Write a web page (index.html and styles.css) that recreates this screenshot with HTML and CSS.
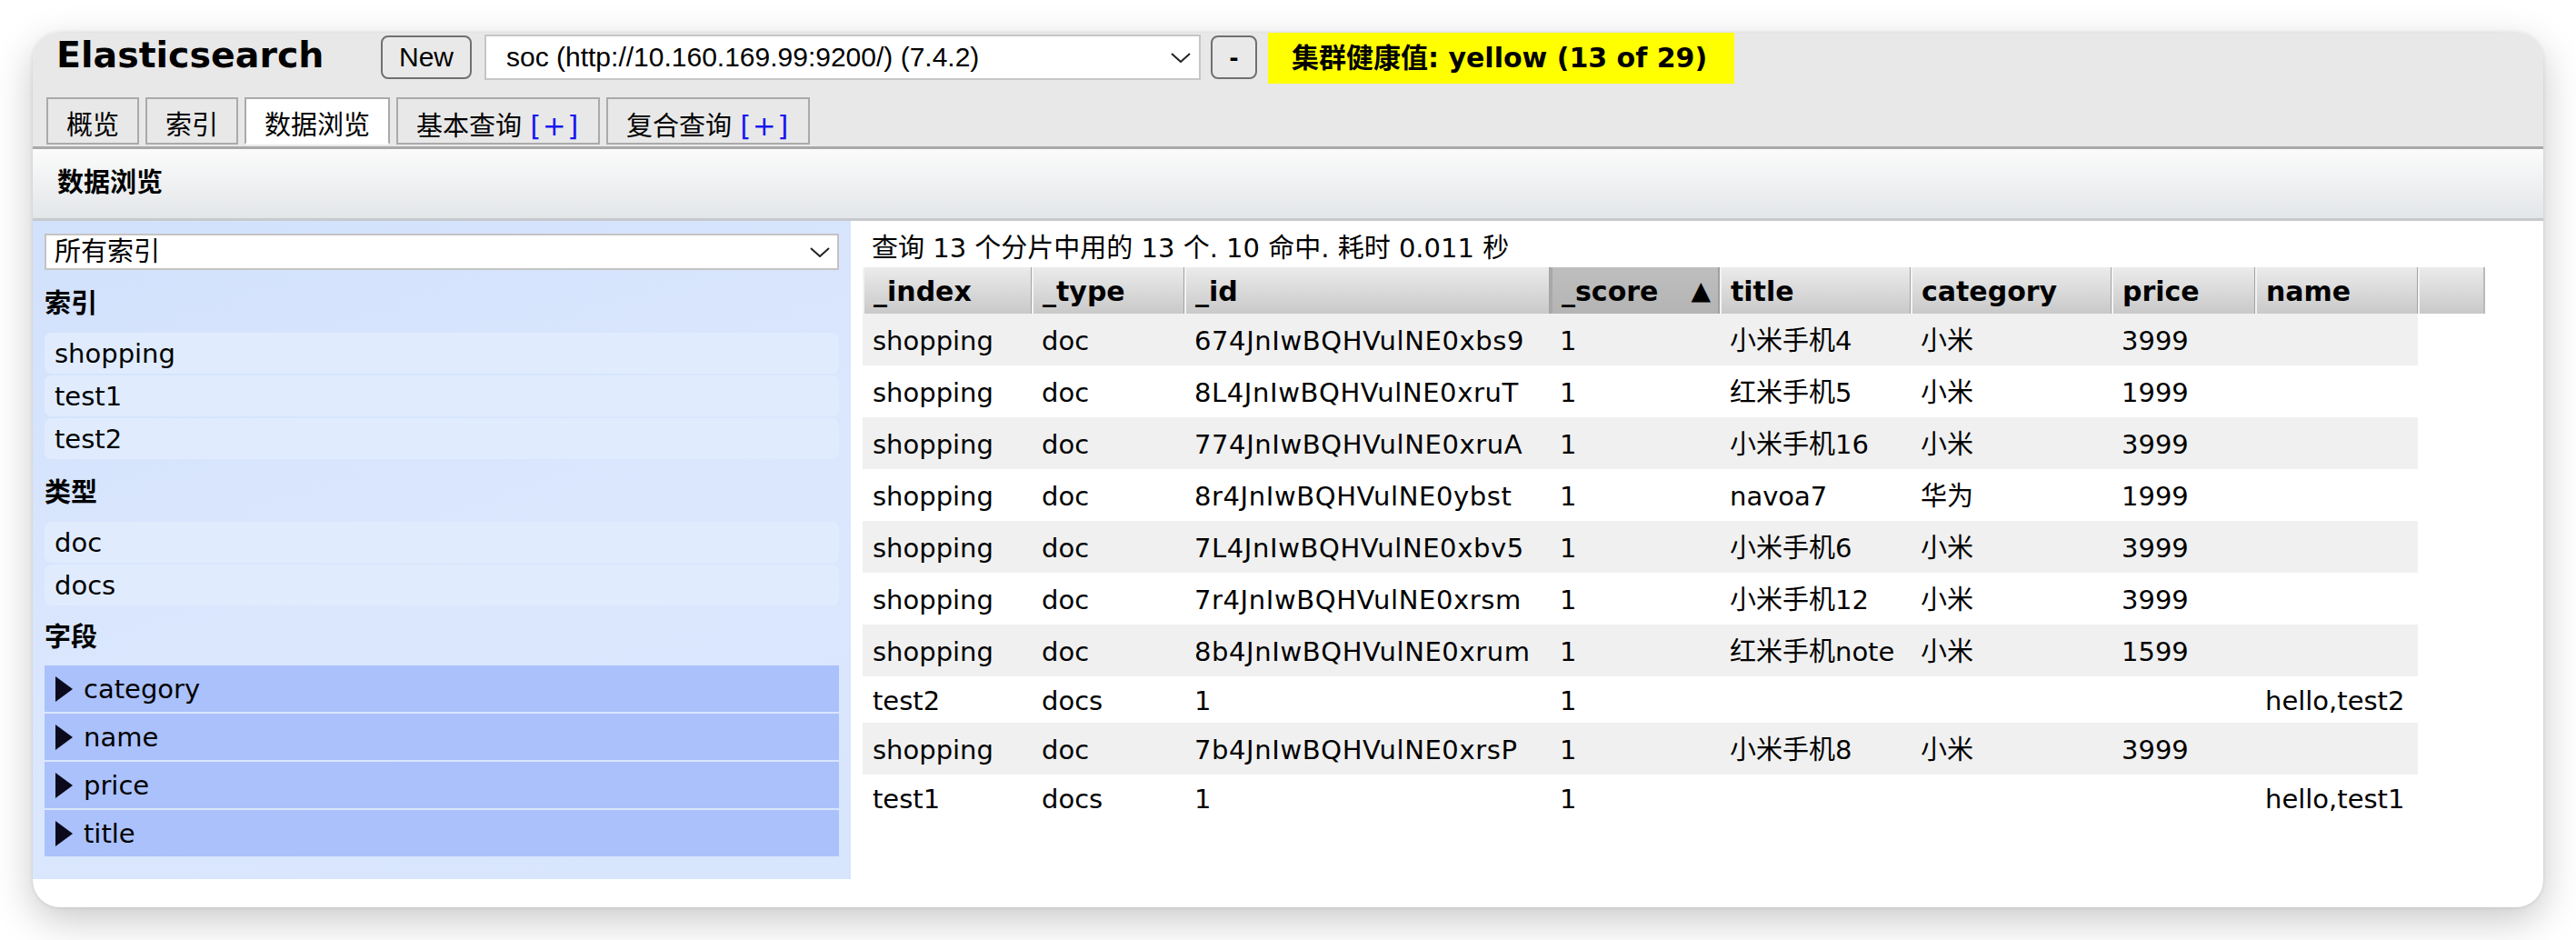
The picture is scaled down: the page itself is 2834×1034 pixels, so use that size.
FILE: index.html
```html
<!DOCTYPE html>
<html lang="zh-CN">
<head>
<meta charset="utf-8">
<title>Elasticsearch</title>
<link rel="stylesheet" href="styles.css">
</head>
<body>
<div class="window">
  <header class="header">
    <div class="toprow">
      <h1 class="brand">Elasticsearch</h1>
      <button class="btn btn-new">New</button>
      <div class="conn-select">
        <span>soc (http://10.160.169.99:9200/) (7.4.2)</span>
        <svg class="chev" width="22" height="11" viewBox="0 0 22 11"><polyline points="1,1 11,10 21,1" fill="none" stroke="#222" stroke-width="2"/></svg>
      </div>
      <button class="btn btn-minus">-</button>
      <div class="health">集群健康值: yellow (13 of 29)</div>
    </div>
    <nav class="tabs">
      <div class="tab">概览</div>
      <div class="tab">索引</div>
      <div class="tab active">数据浏览</div>
      <div class="tab">基本查询 <span class="plus">[+]</span></div>
      <div class="tab">复合查询 <span class="plus">[+]</span></div>
    </nav>
  </header>
  <div class="section-title">数据浏览</div>
  <div class="content">
    <aside class="sidebar">
      <div class="idx-select">
        <span>所有索引</span>
        <svg class="chev" width="22" height="11" viewBox="0 0 22 11"><polyline points="1,1 11,10 21,1" fill="none" stroke="#222" stroke-width="2"/></svg>
      </div>
      <div class="side-h">索引</div>
      <div class="group">
        <div class="side-item">shopping</div>
        <div class="side-item">test1</div>
        <div class="side-item">test2</div>
      </div>
      <div class="side-h">类型</div>
      <div class="group">
        <div class="side-item">doc</div>
        <div class="side-item">docs</div>
      </div>
      <div class="side-h side-h-fields">字段</div>
      <div class="group">
        <div class="field"><i class="tri"></i>category</div>
        <div class="field"><i class="tri"></i>name</div>
        <div class="field"><i class="tri"></i>price</div>
        <div class="field"><i class="tri"></i>title</div>
      </div>
    </aside>
    <main class="results">
      <div class="info">查询 13 个分片中用的 13 个. 10 命中. 耗时 0.011 秒</div>
      <table class="grid">
        <colgroup>
          <col class="w-index"><col class="w-type"><col class="w-id"><col class="w-score"><col class="w-title"><col class="w-cat"><col class="w-price"><col class="w-name"><col class="w-extra">
        </colgroup>
        <thead>
          <tr>
            <th>_index</th><th>_type</th><th>_id</th><th class="sorted">_score <span class="arrow">▲</span></th><th>title</th><th>category</th><th>price</th><th>name</th><th class="filler"></th>
          </tr>
        </thead>
        <tbody>
          <tr class="c"><td>shopping</td><td>doc</td><td class="id">674JnIwBQHVulNE0xbs9</td><td>1</td><td>小米手机4</td><td>小米</td><td>3999</td><td></td></tr>
          <tr class="c"><td>shopping</td><td>doc</td><td class="id">8L4JnIwBQHVulNE0xruT</td><td>1</td><td>红米手机5</td><td>小米</td><td>1999</td><td></td></tr>
          <tr class="c"><td>shopping</td><td>doc</td><td class="id">774JnIwBQHVulNE0xruA</td><td>1</td><td>小米手机16</td><td>小米</td><td>3999</td><td></td></tr>
          <tr class="c"><td>shopping</td><td>doc</td><td class="id">8r4JnIwBQHVulNE0ybst</td><td>1</td><td>navoa7</td><td>华为</td><td>1999</td><td></td></tr>
          <tr class="c"><td>shopping</td><td>doc</td><td class="id">7L4JnIwBQHVulNE0xbv5</td><td>1</td><td>小米手机6</td><td>小米</td><td>3999</td><td></td></tr>
          <tr class="c"><td>shopping</td><td>doc</td><td class="id">7r4JnIwBQHVulNE0xrsm</td><td>1</td><td>小米手机12</td><td>小米</td><td>3999</td><td></td></tr>
          <tr class="c"><td>shopping</td><td>doc</td><td class="id">8b4JnIwBQHVulNE0xrum</td><td>1</td><td>红米手机note</td><td>小米</td><td>1599</td><td></td></tr>
          <tr><td>test2</td><td>docs</td><td>1</td><td>1</td><td></td><td></td><td></td><td>hello,test2</td></tr>
          <tr class="c"><td>shopping</td><td>doc</td><td class="id">7b4JnIwBQHVulNE0xrsP</td><td>1</td><td>小米手机8</td><td>小米</td><td>3999</td><td></td></tr>
          <tr><td>test1</td><td>docs</td><td>1</td><td>1</td><td></td><td></td><td></td><td>hello,test1</td></tr>
        </tbody>
      </table>
    </main>
  </div>
</div>
</body>
</html>
```
FILE: styles.css
```css
* { box-sizing: border-box; }

html, body {
  margin: 0;
  padding: 0;
  background: #ffffff;
}

body {
  width: 2834px;
  height: 1034px;
  overflow: hidden;
  font-family: "DejaVu Sans", "Noto Sans CJK SC", sans-serif;
  font-size: 29px;
  color: #000;
}

.window {
  margin: 36px 0 0 36px;
  width: 2762px;
  height: 962px;
  border-radius: 30px;
  overflow: hidden;
  background: #ffffff;
  box-shadow: 0 14px 44px rgba(0, 0, 0, 0.22), 0 0 4px rgba(0, 0, 0, 0.12);
}

/* ---------- header ---------- */
.header {
  background: #e8e8e8;
  border-bottom: 3px solid #a9a9a9;
  padding-bottom: 2px;
}

.toprow {
  display: flex;
  align-items: flex-start;
  height: 56px;
}

.brand {
  margin: 0;
  width: 383px;
  padding-left: 26px;
  font-family: "DejaVu Sans", sans-serif;
  font-weight: bold;
  font-size: 39.5px;
  line-height: 48px;
  white-space: nowrap;
}

.btn {
  font-family: "Liberation Sans", Arial, sans-serif;
  font-size: 30px;
  height: 48px;
  margin-top: 3px;
  border: 2px solid #707070;
  border-radius: 8px;
  background: #e9e9e9;
  color: #000;
  padding: 0;
}

.btn-new { width: 100px; }

.btn-minus {
  width: 51px;
  margin-left: 11px;
  font-weight: bold;
}

.conn-select {
  margin-left: 14px;
  margin-top: 2px;
  width: 788px;
  height: 50px;
  border: 2px solid #c6c6c6;
  background: #ffffff;
  display: flex;
  align-items: center;
  justify-content: space-between;
  padding: 0 9px 0 22px;
  font-family: "Liberation Sans", Arial, sans-serif;
  font-size: 30px;
}

.chev { display: block; flex: none; }

.health {
  margin-left: 12px;
  width: 513px;
  height: 56px;
  background: #ffff00;
  padding-left: 26px;
  font-weight: bold;
  font-size: 30px;
  line-height: 56px;
  white-space: nowrap;
}

.tabs {
  display: flex;
  gap: 7px;
  padding-left: 15px;
  margin-top: 15px;
}

.tab {
  height: 52px;
  border: 2px solid #aaaaaa;
  padding: 10px 20px 0;
  line-height: 38px;
  font-size: 29px;
  background: #e8e8e8;
  white-space: nowrap;
}

.tab.active {
  background: #ffffff;
  border-bottom-color: #ffffff;
}

.plus {
  color: #1818f0;
  font-size: 31px;
  letter-spacing: 1.5px;
}

/* ---------- section title ---------- */
.section-title {
  height: 79px;
  background: linear-gradient(#fbfbfb, #e3e6e9);
  border-bottom: 3px solid #c6cacd;
  padding-left: 27px;
  font-weight: bold;
  font-size: 29px;
  line-height: 74px;
}

/* ---------- content ---------- */
.content {
  display: flex;
  align-items: flex-start;
}

.sidebar {
  width: 900px;
  flex: none;
  padding: 14px 13px 25px;
  background: linear-gradient(160deg, #d2e1fc 0%, #dbe7fd 55%, #d7e5fd 100%);
}

.idx-select {
  height: 40px;
  border: 2px solid #c4c4c4;
  background: #ffffff;
  display: flex;
  align-items: center;
  justify-content: space-between;
  padding: 0 8px 0 9px;
  line-height: 36px;
}

.side-h {
  padding-top: 16px;
  line-height: 42px;
  margin-bottom: 11px;
  font-weight: bold;
}

.side-h-fields {
  padding-top: 14px;
  margin-bottom: 10px;
}

.group {
  display: flex;
  flex-direction: column;
  gap: 2px;
}

.side-item {
  height: 45px;
  line-height: 47px;
  background: #e0ecfe;
  border-radius: 8px;
  padding-left: 11px;
}

.field {
  height: 51px;
  background: #abc1fb;
  display: flex;
  align-items: center;
  gap: 12px;
  padding-left: 12px;
  padding-top: 1px;
}

.tri {
  display: block;
  width: 0;
  height: 0;
  border-left: 19px solid #0a0a1c;
  border-top: 14px solid transparent;
  border-bottom: 14px solid transparent;
}

.results {
  flex: 1;
  padding: 10px 0 0 13px;
}

.info {
  line-height: 41px;
  padding-left: 10px;
  white-space: nowrap;
}

.grid {
  border-collapse: separate;
  border-spacing: 0;
  table-layout: fixed;
  width: 1785px;
}

.w-index { width: 186px; }
.w-type { width: 168px; }
.w-id { width: 402px; }
.w-score { width: 187px; }
.w-title { width: 210px; }
.w-cat { width: 221px; }
.w-price { width: 158px; }
.w-name { width: 179px; }
.w-extra { width: 74px; }

.grid th {
  height: 51px;
  padding: 2px 10px 0 10px;
  text-align: left;
  font-weight: bold;
  font-size: 30px;
  white-space: nowrap;
  background: linear-gradient(#ebebeb, #c9c9c9);
  border-left: 2px solid #f3f3f3;
  border-right: 1px solid #a3a3a3;
}

.grid th.sorted {
  background: linear-gradient(#bebebe, #b4b4b4);
  border-left: 3px solid #a8a8a8;
  border-right: 2px solid #a0a0a0;
}

.arrow {
  float: right;
  font-size: 28px;
  margin-right: -2px;
}

.grid th.filler {
  border-right: 2px solid #b9b9b9;
}

.grid td {
  height: 51px;
  padding: 2px 11px 0;
  line-height: 34px;
  white-space: nowrap;
  overflow: hidden;
}

.grid td.id { letter-spacing: 0.6px; }

.grid tr.c td { height: 57px; }

.grid tbody tr:nth-child(odd) td { background: #f0f0f0; }
```
